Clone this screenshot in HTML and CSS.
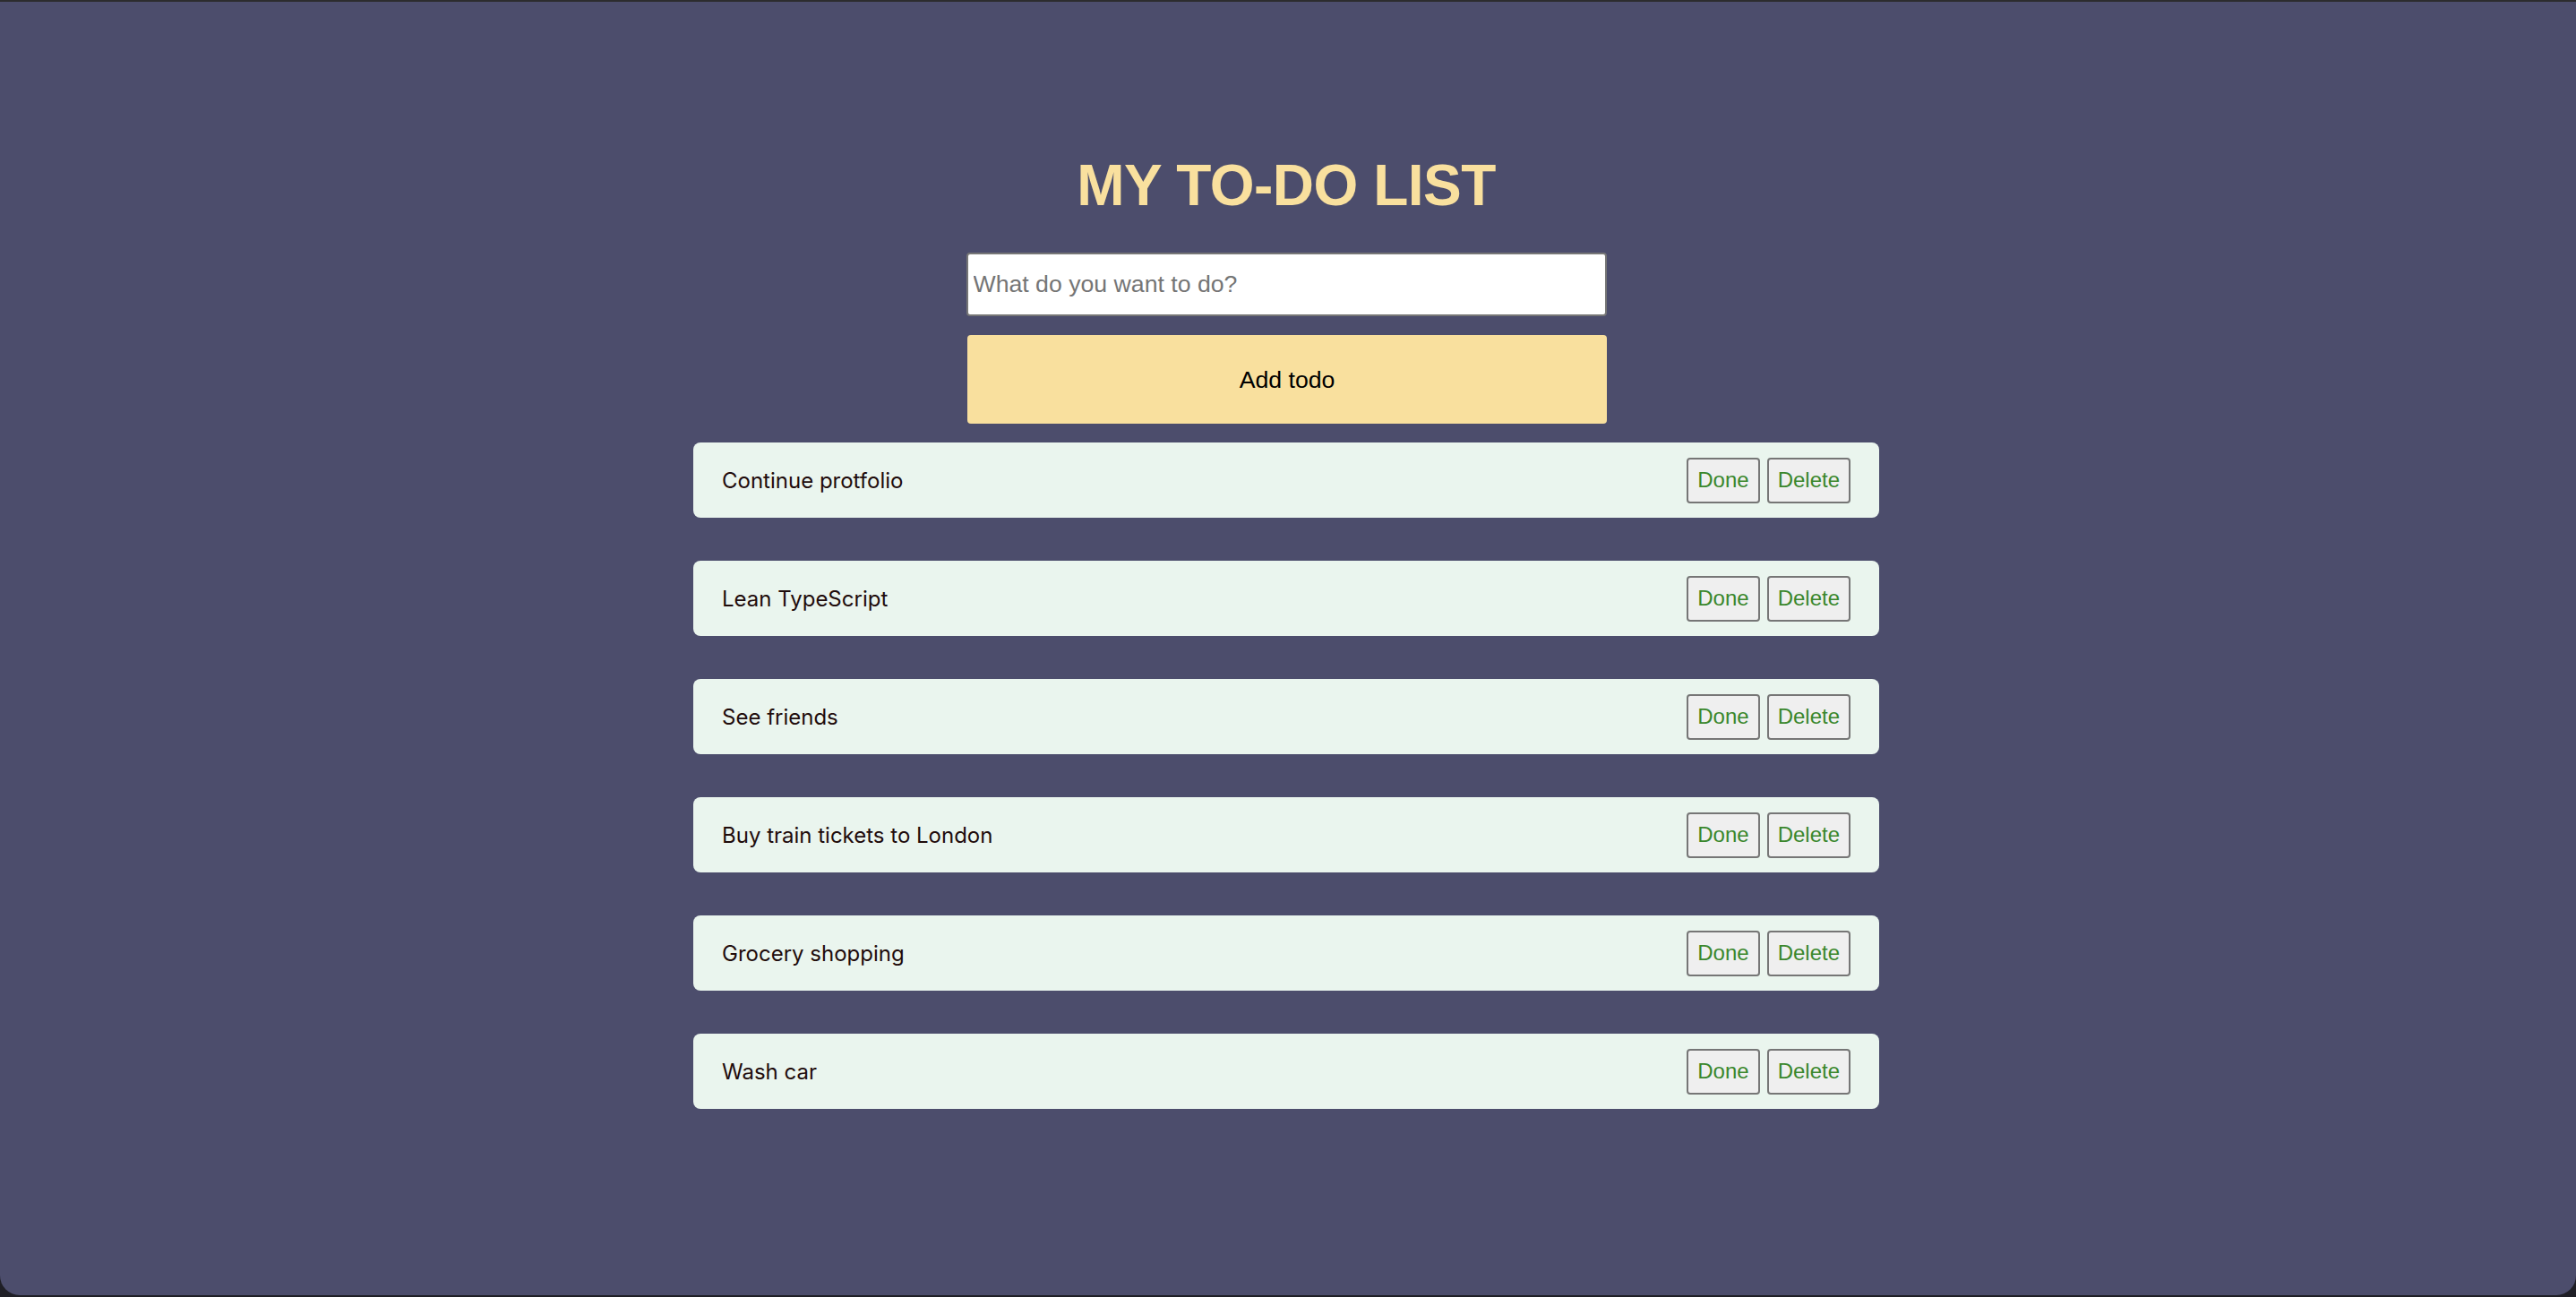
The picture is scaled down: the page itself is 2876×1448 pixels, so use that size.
FILE: index.html
```html
<!DOCTYPE html>
<html lang="en">
<head>
<meta charset="utf-8">
<title>My To-Do List</title>
<link rel="stylesheet" href="styles.css">
</head>
<body>
<div class="window">
  <h1 class="title">MY TO-DO LIST</h1>
  <input class="todo-input" type="text" placeholder="What do you want to do?">
  <button class="add-btn">Add todo</button>
  <ul class="todo-list">
    <li class="todo-item"><span class="todo-text">Continue protfolio</span><div class="actions"><button class="act-btn">Done</button><button class="act-btn">Delete</button></div></li>
    <li class="todo-item"><span class="todo-text">Lean TypeScript</span><div class="actions"><button class="act-btn">Done</button><button class="act-btn">Delete</button></div></li>
    <li class="todo-item"><span class="todo-text">See friends</span><div class="actions"><button class="act-btn">Done</button><button class="act-btn">Delete</button></div></li>
    <li class="todo-item"><span class="todo-text">Buy train tickets to London</span><div class="actions"><button class="act-btn">Done</button><button class="act-btn">Delete</button></div></li>
    <li class="todo-item"><span class="todo-text">Grocery shopping</span><div class="actions"><button class="act-btn">Done</button><button class="act-btn">Delete</button></div></li>
    <li class="todo-item"><span class="todo-text">Wash car</span><div class="actions"><button class="act-btn">Done</button><button class="act-btn">Delete</button></div></li>
  </ul>
</div>
</body>
</html>
```
FILE: styles.css
```css
html, body {
  margin: 0;
  padding: 0;
  background: #1f1f26;
}

.window {
  box-sizing: border-box;
  height: 1446px;
  background: #4c4d6c;
  border-top: 2px solid #2c2c2e;
  border-radius: 0 0 22px 22px;
  display: flex;
  flex-direction: column;
  align-items: center;
  padding: 168px 4px 0 0;
}

.title {
  margin: 0;
  font-family: "Liberation Sans", Arial, sans-serif;
  font-weight: 700;
  font-size: 64px;
  line-height: 74px;
  letter-spacing: -0.5px;
  color: #f9e09e;
}

.todo-input {
  box-sizing: border-box;
  margin: 38px 0 0 0;
  width: 715px;
  height: 71px;
  padding: 0 6px;
  border: 2px solid #767676;
  border-radius: 4px;
  background: #ffffff;
  font-family: "Liberation Sans", Arial, sans-serif;
  font-size: 26.67px;
  color: #000;
}

.todo-input::placeholder {
  color: #757575;
}

.add-btn {
  box-sizing: border-box;
  margin: 21px 0 0 2px;
  width: 714px;
  height: 99px;
  padding: 2px 0 0 0;
  border: none;
  border-radius: 4px;
  background: #f9e09e;
  font-family: "Liberation Sans", Arial, sans-serif;
  font-size: 26.67px;
  color: #000;
}

.todo-list {
  list-style: none;
  margin: 21px 0 0 0;
  padding: 0;
  width: 1324px;
  display: flex;
  flex-direction: column;
  gap: 48px;
}

.todo-item {
  box-sizing: border-box;
  height: 84px;
  padding: 0 32px 0 32px;
  border-radius: 8px;
  background: #eaf5ee;
  display: flex;
  align-items: center;
  justify-content: space-between;
}

.todo-text {
  font-family: Inter, "Noto Sans", sans-serif;
  font-size: 24px;
  color: #1f0c0c;
}

.actions {
  display: flex;
  gap: 8px;
}

.act-btn {
  box-sizing: border-box;
  height: 51px;
  padding: 0 10px;
  border: 2px solid #767676;
  border-radius: 4px;
  background: #efefef;
  font-family: "Liberation Sans", Arial, sans-serif;
  font-size: 24px;
  color: #3a872c;
}
```
